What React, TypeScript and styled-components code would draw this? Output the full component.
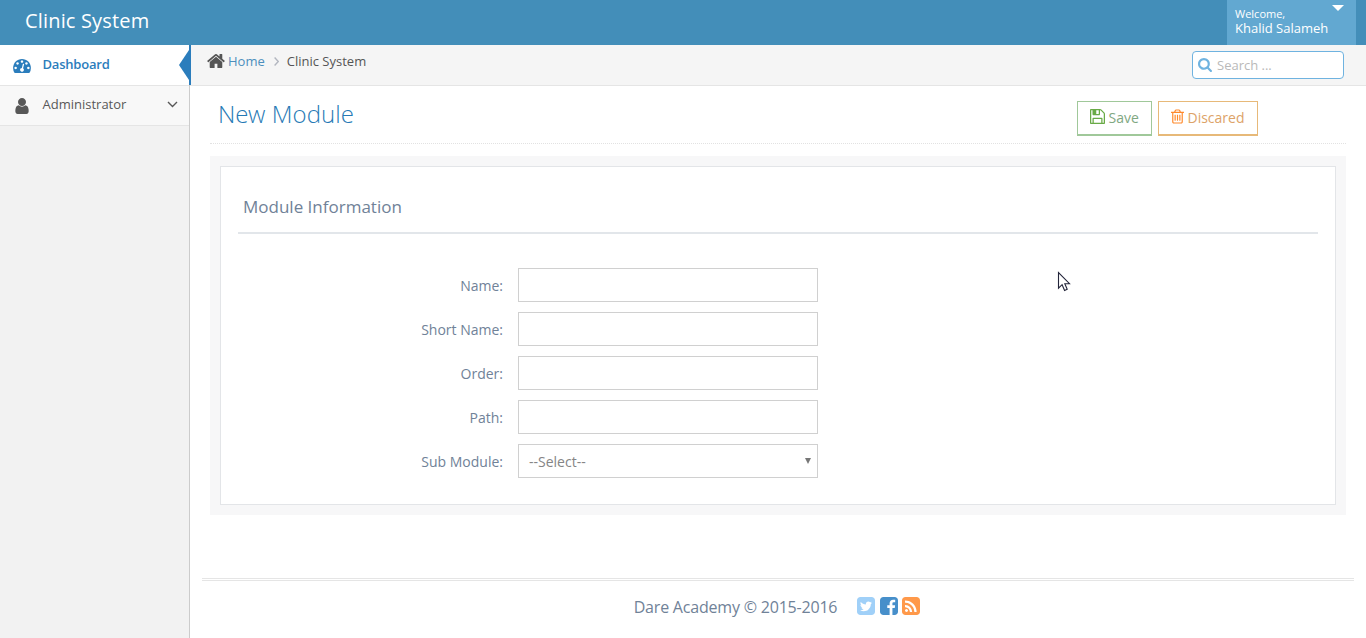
import React from "react";
import styled, { createGlobalStyle, css } from "styled-components";

const GlobalStyle = createGlobalStyle`
  *, *::before, *::after { box-sizing: border-box; }
  body {
    margin: 0;
    background: #fff;
    color: #393939;
    font: 13px/1.5 "Open Sans", sans-serif;
  }
  input, select, button { font-family: inherit; }
`;

const icons = {
  dashboard: {
    box: "0 256 1792 1408",
    d: "M384 1152q0-53-37.5-90.5t-90.5-37.5-90.5 37.5-37.5 90.5 37.5 90.5 90.5 37.5 90.5-37.5 37.5-90.5zm192-448q0-53-37.5-90.5t-90.5-37.5-90.5 37.5-37.5 90.5 37.5 90.5 90.5 37.5 90.5-37.5 37.5-90.5zm428 481l101-382q6-26-7.5-48.5t-38.5-29.5-48 6.5-30 39.5l-101 382q-60 5-107 43.5t-63 98.5q-20 77 20 146t117 89 146-20 89-117q16-60-6-117t-72-91zm660-33q0-53-37.5-90.5t-90.5-37.5-90.5 37.5-37.5 90.5 37.5 90.5 90.5 37.5 90.5-37.5 37.5-90.5zm-640-640q0-53-37.5-90.5t-90.5-37.5-90.5 37.5-37.5 90.5 37.5 90.5 90.5 37.5 90.5-37.5 37.5-90.5zm448 192q0-53-37.5-90.5t-90.5-37.5-90.5 37.5-37.5 90.5 37.5 90.5 90.5 37.5 90.5-37.5 37.5-90.5zm320 448q0 261-141 483-19 29-54 29h-1402q-35 0-54-29-141-221-141-483 0-182 71-348t191-286 286-191 348-71 348 71 286 191 191 286 71 348z",
  },
  user: {
    box: "256 128 1280 1536",
    d: "M1536 1399q0 109-62.5 187t-150.5 78h-854q-88 0-150.5-78t-62.5-187q0-85 8.5-160.5t31.5-152 58.5-131 94-89 134.5-34.5q131 128 313 128t313-128q76 0 134.5 34.5t94 89 58.5 131 31.5 152 8.5 160.5zm-256-887q0 159-112.5 271.5t-271.5 112.5-271.5-112.5-112.5-271.5 112.5-271.5 271.5-112.5 271.5 112.5 112.5 271.5z",
  },
  home: {
    box: "89 253 1614 1283",
    d: "M1472 992v480q0 26-19 45t-45 19h-384v-384h-256v384h-384q-26 0-45-19t-19-45v-480q0-1 .5-3t.5-3l575-474 575 474q1 2 1 6zm223-69l-62 74q-8 9-21 11h-3q-13 0-21-7l-692-577-692 577q-12 8-24 7-13-2-21-11l-62-74q-8-10-7-23.5t11-21.5l719-599q32-26 76-26t76 26l244 204v-195q0-14 9-23t23-9h192q14 0 23 9t9 23v408l219 182q10 8 11 21.5t-7 23.5z",
  },
  search: {
    box: "64 128 1664 1664",
    d: "M1216 832q0-185-131.5-316.5t-316.5-131.5-316.5 131.5-131.5 316.5 131.5 316.5 316.5 131.5 316.5-131.5 131.5-316.5zm512 832q0 52-38 90t-90 38q-54 0-90-38l-343-342q-179 124-399 124-143 0-273.5-55.5t-225-150-150-225-55.5-273.5 55.5-273.5 150-225 225-150 273.5-55.5 273.5 55.5 225 150 150 225 55.5 273.5q0 220-124 399l343 343q37 37 37 90z",
  },
  save: {
    box: "128 128 1536 1536",
    d: "M512 1536h768v-384h-768v384zm896 0h128v-896q0-14-10-38.5t-20-34.5l-281-281q-10-10-34-20t-39-10v416q0 40-28 68t-68 28h-576q-40 0-68-28t-28-68v-416h-128v1280h128v-416q0-40 28-68t68-28h832q40 0 68 28t28 68v416zm-384-928v-320q0-13-9.5-22.5t-22.5-9.5h-192q-13 0-22.5 9.5t-9.5 22.5v320q0 13 9.5 22.5t22.5 9.5h192q13 0 22.5-9.5t9.5-22.5zm640 32v928q0 40-28 68t-68 28h-1344q-40 0-68-28t-28-68v-1344q0-40 28-68t68-28h928q40 0 88 20t76 48l280 280q28 28 48 76t20 88z",
  },
  trash: {
    box: "192 128 1408 1536",
    d: "M704 736v576q0 14-9 23t-23 9h-64q-14 0-23-9t-9-23v-576q0-14 9-23t23-9h64q14 0 23 9t9 23zm256 0v576q0 14-9 23t-23 9h-64q-14 0-23-9t-9-23v-576q0-14 9-23t23-9h64q14 0 23 9t9 23zm256 0v576q0 14-9 23t-23 9h-64q-14 0-23-9t-9-23v-576q0-14 9-23t23-9h64q14 0 23 9t9 23zm128 724v-948h-896v948q0 22 7 40.5t14.5 27 10.5 8.5h832q3 0 10.5-8.5t14.5-27 7-40.5zm-672-1076h448l-48-117q-7-9-17-11h-317q-10 2-17 11zm928 32v64q0 14-9 23t-23 9h-96v948q0 83-47 143.5t-113 60.5h-832q-66 0-113-58.5t-47-141.5v-952h-96q-14 0-23-9t-9-23v-64q0-14 9-23t23-9h309l70-167q15-37 54-63t79-26h320q40 0 79 26t54 63l70 167h309q14 0 23 9t9 23z",
  },
  twitter: {
    box: "128 128 1536 1536",
    d: "M1408 610q-56 25-121 34 68-40 93-117-65 38-134 51-61-66-153-66-87 0-148.5 61.5t-61.5 148.5q0 29 5 48-129-7-242-65t-192-155q-29 50-29 106 0 114 91 175-47-1-100-26v2q0 75 50 133.5t123 72.5q-29 8-51 8-13 0-39-4 21 63 74.5 104t121.5 42q-116 90-261 90-26 0-50-3 148 94 322 94 112 0 210-35.5t168-95 120.5-137 75-162 24.5-168.5q0-18-1-27 63-45 105-109zm256-194v960q0 119-84.5 203.5t-203.5 84.5h-960q-119 0-203.5-84.5t-84.5-203.5v-960q0-119 84.5-203.5t203.5-84.5h960q119 0 203.5 84.5t84.5 203.5z",
  },
  facebook: {
    box: "128 128 1536 1536",
    d: "M1376 128q119 0 203.5 84.5t84.5 203.5v960q0 119-84.5 203.5t-203.5 84.5h-188v-595h199l30-232h-229v-148q0-56 23.5-84t91.5-28l122-1v-207q-63-9-178-9-136 0-217.5 80t-81.5 226v171h-200v232h200v595h-532q-119 0-203.5-84.5t-84.5-203.5v-960q0-119 84.5-203.5t203.5-84.5h960z",
  },
  rss: {
    box: "128 128 1536 1536",
    d: "M640 1280q0-53-37.5-90.5t-90.5-37.5-90.5 37.5-37.5 90.5 37.5 90.5 90.5 37.5 90.5-37.5 37.5-90.5zm351 94q-13-232-177-396t-396-177q-14-1-24 9t-10 23v128q0 13 8.5 22t21.5 10q154 11 264 121t121 264q1 13 10 21.5t22 8.5h128q13 0 23-10t9-24zm384 1q-5-154-56-297.5t-139.5-260-205-205-260-139.5-297.5-56q-14-1-23 9-10 10-10 23v128q0 13 9 22t22 10q204 7 378 111.5t278.5 278.5 111.5 378q1 13 10 22t22 9h128q13 0 23-10 11-9 9-23zm289-959v960q0 119-84.5 203.5t-203.5 84.5h-960q-119 0-203.5-84.5t-84.5-203.5v-960q0-119 84.5-203.5t203.5-84.5h960q119 0 203.5 84.5t84.5 203.5z",
  },
};

const Svg = styled.svg<{ $color?: string }>`
  display: block;
  flex: none;
  fill: ${(p) => p.$color ?? "currentColor"};
`;

type IconProps = { name: keyof typeof icons; w: number; h: number; color?: string };

const Icon = ({ name, w, h, color }: IconProps) => (
  <Svg viewBox={icons[name].box} width={w} height={h} $color={color} aria-hidden>
    <path d={icons[name].d} />
  </Svg>
);

const Page = styled.div`
  display: flex;
  flex-direction: column;
  height: 638px;
  overflow: hidden;
`;

const Navbar = styled.header`
  display: flex;
  justify-content: space-between;
  flex: none;
  height: 45px;
  padding: 0 10px 0 25px;
  background: #438eb9;
  color: #fff;
`;

const Brand = styled.div`
  font-size: 20px;
  letter-spacing: 0.17px;
  line-height: 42px;
`;

const UserMenu = styled.div`
  display: flex;
  justify-content: space-between;
  width: 129px;
  padding: 7px 12px 0 8px;
  background: #62a8d1;
  font-size: 13px;
  line-height: 14px;
`;

const Greeting = styled.div`
  display: flex;
  flex-direction: column;
  white-space: nowrap;
`;

const Welcome = styled.span`
  height: 14px;
  font-size: 11px;
`;

const Caret = styled.span`
  width: 0;
  height: 0;
  margin: -2px 0 0 -8px;
  border: 6px solid transparent;
  border-top-color: #fff;
  border-bottom: 0;
`;

const Body = styled.div`
  display: flex;
  flex: 1;
  min-height: 0;
`;

const Sidebar = styled.nav`
  width: 190px;
  flex: none;
  background: #f2f2f2;
  border-right: 1px solid #ccc;
`;

const NavItem = styled.a<{ $active?: boolean }>`
  position: relative;
  display: flex;
  align-items: center;
  height: 40px;
  padding: 0 11px 2px 12px;
  border-bottom: 1px solid #e5e5e5;
  background: #f8f8f8;
  color: #585858;

  ${(p) =>
    p.$active &&
    css`
      height: 41px;
      padding-bottom: 1px;
      background: #fff;
      color: #2b7dbc;
      font-weight: 600;
      letter-spacing: -0.2px;

      &::before {
        content: "";
        position: absolute;
        top: 5px;
        right: 0;
        border: 15px solid transparent;
        border-width: 15px 10px 15px 0;
        border-right-color: #2b7dbc;
      }
      &::after {
        content: "";
        position: absolute;
        top: 0;
        right: -2px;
        width: 2px;
        height: 40px;
        background: #2b7dbc;
      }
    `}
`;

const NavIcon = styled.span`
  display: flex;
  justify-content: center;
  width: 20px;
  margin: 2px 10.5px 0 0;
`;

const NavLabel = styled.span`
  flex: 1;
`;

const Main = styled.div`
  display: flex;
  flex-direction: column;
  flex: 1;
  min-width: 0;
`;

const Crumbs = styled.div`
  display: flex;
  justify-content: space-between;
  flex: none;
  height: 41px;
  padding: 6px 22px 0 17px;
  border-bottom: 1px solid #e5e5e5;
  background: #f5f5f5;
`;

const Trail = styled.div`
  display: flex;
  align-items: center;
  height: 21px;
  color: #555;
`;

const CrumbIcon = styled.span`
  margin-top: -2px;
`;

const CrumbLink = styled.a`
  margin: 0 9px 0 3px;
  color: #4c8fbd;
`;

const CrumbCurrent = styled.span`
  margin-left: 8px;
`;

const SearchBox = styled.label`
  display: flex;
  align-items: center;
  gap: 5px;
  width: 152px;
  height: 28px;
  padding: 0 6px 1px 5px;
  border: 1px solid #6fb3e0;
  border-radius: 4px;
  background: #fff;
`;

const SearchInput = styled.input`
  width: 110px;
  height: 24px;
  padding: 0;
  border: 0;
  outline: 0;
  background: transparent;
  font-size: 13px;
  &::placeholder { color: #b9b9b9; opacity: 1; }
`;

const Content = styled.main`
  flex: 1;
  padding: 0 20px;
`;

const TitleRow = styled.div`
  display: flex;
  justify-content: space-between;
  height: 58px;
  padding: 15px 88px 0 8px;
  border-bottom: 1px dotted #e2e2e2;
`;

const Title = styled.h1`
  margin: -1px 0 0;
  color: #2679b5;
  font-family: "Open Sans Light", "Open Sans", sans-serif;
  font-size: 24px;
  font-weight: 300;
  letter-spacing: 0.06px;
  line-height: 28px;
`;

const Actions = styled.div`
  display: flex;
  gap: 6px;
`;

const ActionButton = styled.button<{ $line: string; $text: string; $width: number }>`
  display: flex;
  align-items: center;
  gap: 3.5px;
  width: ${(p) => p.$width}px;
  height: 35px;
  padding: 0 0 2px 12px;
  border: 1px solid ${(p) => p.$line};
  border-bottom-width: 2px;
  background: #fff;
  color: ${(p) => p.$text};
  font-size: 14px;

  svg { margin-top: -1px; }
`;

const Well = styled.section`
  height: 359px;
  margin-top: 12px;
  padding: 10px;
  background: #f7f7f8;
`;

const Card = styled.div`
  height: 339px;
  padding: 25px 17px 0;
  border: 1px solid #e3e5e8;
  background: #fff;
`;

const SectionTitle = styled.h2`
  height: 42px;
  margin: 0 0 34px;
  padding-left: 5px;
  border-bottom: 2px solid #e2e6ea;
  color: #708298;
  font-size: 17px;
  font-weight: 400;
  line-height: 30px;
`;

const Form = styled.form`
  display: flex;
  flex-direction: column;
  gap: 10px;
`;

const FieldRow = styled.div`
  display: grid;
  grid-template: 34px / 265px 300px;
  column-gap: 15px;
`;

const FieldLabel = styled.label`
  color: #708298;
  font-size: 14px;
  line-height: 35px;
  text-align: right;
`;

const field = css`
  width: 300px;
  height: 34px;
  border: 1px solid #d0d0d0;
  border-radius: 0;
  background: #fff;
  color: #858585;
  font-size: 14px;
`;

const TextInput = styled.input`
  ${field}
  padding: 0 8px;
`;

const SelectBox = styled.div`
  ${field}
  display: flex;
  align-items: center;
  justify-content: space-between;
  padding: 1px 6px 0 10px;
`;

const SelectArrow = styled.span`
  margin-top: -2px;
  border: 3.5px solid transparent;
  border-top: 6px solid #777;
  border-bottom: 0;
`;

const Footer = styled.footer`
  display: flex;
  justify-content: center;
  flex: none;
  height: 60px;
  margin: 0 12px;
  padding: 14px 2px 0 0;
  border-top: 3px double #e5e5e5;
  color: #708298;
  font-size: 16px;
  line-height: 24px;
`;

const Copyright = styled.span`
  letter-spacing: -0.2px;
`;

const Social = styled.div`
  display: flex;
  gap: 4.5px;
  margin: 2px 0 0 20px;
`;

const Pointer = styled.svg`
  position: absolute;
  left: 1057px;
  top: 271px;
`;

const textFields = ["Name:", "Short Name:", "Order:", "Path:"];

export default function App() {
  return (
    <Page>
      <GlobalStyle />
      <Navbar>
        <Brand>Clinic System</Brand>
        <UserMenu>
          <Greeting>
            <Welcome>Welcome,</Welcome>
            <span>Khalid Salameh</span>
          </Greeting>
          <Caret />
        </UserMenu>
      </Navbar>
      <Body>
        <Sidebar>
          <NavItem $active>
            <NavIcon><Icon name="dashboard" w={18} h={14} /></NavIcon>
            <NavLabel>Dashboard</NavLabel>
          </NavItem>
          <NavItem>
            <NavIcon><Icon name="user" w={14} h={16} /></NavIcon>
            <NavLabel>Administrator</NavLabel>
            <svg width="11" height="7" viewBox="0 0 11 7" fill="none" stroke="#585858" strokeWidth="1.4">
              <path d="M1 1l4.5 4.5L10 1" />
            </svg>
          </NavItem>
        </Sidebar>
        <Main>
          <Crumbs>
            <Trail>
              <CrumbIcon><Icon name="home" w={18} h={14} /></CrumbIcon>
              <CrumbLink>Home</CrumbLink>
              <svg width="5" height="9" viewBox="0 0 5 9" fill="none" stroke="#b2b6bf" strokeWidth="1.4">
                <path d="M.6.6l3.7 3.9L.6 8.4" />
              </svg>
              <CrumbCurrent>Clinic System</CrumbCurrent>
            </Trail>
            <SearchBox>
              <Icon name="search" w={14} h={14} color="#6fb3e0" />
              <SearchInput placeholder="Search ..." />
            </SearchBox>
          </Crumbs>
          <Content>
            <TitleRow>
              <Title>New Module</Title>
              <Actions>
                <ActionButton $line="#a0c89a" $text="#7fa882" $width={75}>
                  <Icon name="save" w={15} h={15} color="#69aa46" />
                  Save
                </ActionButton>
                <ActionButton $line="#e7b979" $text="#dda368" $width={100}>
                  <Icon name="trash" w={13} h={15} color="#ff892a" />
                  Discared
                </ActionButton>
              </Actions>
            </TitleRow>
            <Well>
              <Card>
                <SectionTitle>Module Information</SectionTitle>
                <Form>
                  {textFields.map((label) => (
                    <FieldRow key={label}>
                      <FieldLabel>{label}</FieldLabel>
                      <TextInput aria-label={label} />
                    </FieldRow>
                  ))}
                  <FieldRow>
                    <FieldLabel>Sub Module:</FieldLabel>
                    <SelectBox>
                      --Select--
                      <SelectArrow />
                    </SelectBox>
                  </FieldRow>
                </Form>
              </Card>
            </Well>
          </Content>
          <Footer>
            <Copyright>Dare Academy © 2015-2016</Copyright>
            <Social>
              <Icon name="twitter" w={18} h={18} color="#a0d0f8" />
              <Icon name="facebook" w={18} h={18} color="#478fca" />
              <Icon name="rss" w={18} h={18} color="#ff994a" />
            </Social>
          </Footer>
        </Main>
      </Body>
      <Pointer width="14" height="21" viewBox="0 0 14 21">
        <path
          d="M1.5 1.5v15.6l3.6-3.4 2.5 5.7 2.6-1.2-2.4-5.5h4.7z"
          fill="#fff"
          stroke="#23253a"
          strokeWidth="1.1"
        />
      </Pointer>
    </Page>
  );
}
